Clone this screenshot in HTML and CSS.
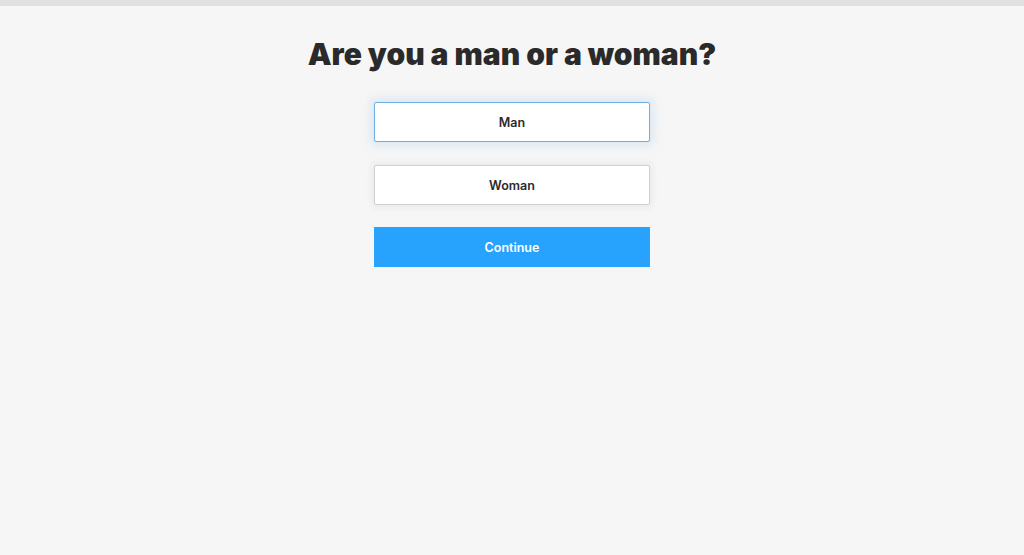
FILE: index.html
```html
<!DOCTYPE html>
<html lang="en">
<head>
<meta charset="utf-8">
<title>Are you a man or a woman?</title>
<link rel="stylesheet" href="styles.css">
</head>
<body>
<div class="topbar"></div>
<main class="quiz">
  <h1 class="title">Are you a man or a woman?</h1>
  <div class="options">
    <button class="option selected">Man</button>
    <button class="option">Woman</button>
  </div>
  <button class="continue">Continue</button>
</main>
</body>
</html>
```
FILE: styles.css
```css
html, body {
  margin: 0;
  padding: 0;
  background: #f6f6f6;
  height: 100%;
}
body {
  font-family: "Inter", "Liberation Sans", sans-serif;
  color: #2b2b2b;
}
.topbar {
  height: 6px;
  background: #e1e1e1;
}
.quiz {
  display: flex;
  flex-direction: column;
  align-items: center;
}
.title {
  margin: 28px 0 0;
  font-family: "Inter", "Liberation Sans", sans-serif;
  font-size: 30px;
  font-weight: 900;
  line-height: 40px;
  color: #2a2a2a;
  letter-spacing: 0;
}
.options {
  margin-top: 28px;
  width: 276px;
  display: flex;
  flex-direction: column;
  gap: 23px;
}
.option, .continue {
  height: 40px;
  width: 276px;
  font-family: "Inter", "Liberation Sans", sans-serif;
  font-size: 12.5px;
  font-weight: 600;
  border-radius: 2px;
  cursor: pointer;
  padding: 0;
}
.option {
  background: #ffffff;
  border: 1px solid #cfcfcf;
  color: #2b2b2b;
  box-shadow: 0 0 6px 2px rgba(220, 225, 232, 0.6);
}
.option.selected {
  border-color: #6eaee0;
  box-shadow: 0 0 8px 4px rgba(200, 222, 240, 0.55);
}
.continue {
  margin-top: 22px;
  background: #27a3fd;
  border: none;
  color: #ffffff;
  border-radius: 0;
}
```
